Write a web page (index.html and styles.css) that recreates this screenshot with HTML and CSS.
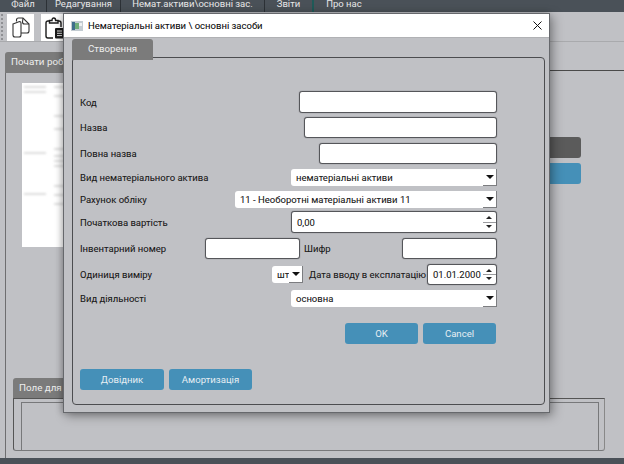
FILE: index.html
```html
<!DOCTYPE html>
<html>
<head>
    <title>Нематеріальні активи</title>
    <link rel="stylesheet" href="styles.css">
</head>

<body>

  <div class="app">
    <div class="menubar">
      <span class="menu-item m1">Файл</span>
      <span class="menu-item m2">Редагування</span>
      <span class="menu-item m3">Немат.активи\основні зас.</span>
      <span class="menu-item m4">Звіти</span>
      <span class="menu-item m5">Про нас</span>
    </div>

    <div class="toolbar">
      <div class="grip"></div>
      <div class="tool tool1">
        <svg width="18" height="21" viewBox="0 0 18 21" fill="none" stroke="#333" stroke-width="1.1">
          <path d="M1 7 L7.5 4.5 Q9 4.5 9 6 V18 Q9 20 7 20 H3 Q1 20 1 18 Z"/>
          <path d="M4.5 4.5 V3 Q4.5 1 6.5 1 H11 L17 7 V14 Q17 16 15 16 H9"/>
          <path d="M11 1 L10.5 5 Q10.5 7 12.5 7 H17"/>
        </svg>
      </div>
      <div class="tool tool2">
        <svg width="19" height="22" viewBox="0 0 19 22" fill="none" stroke="#1c1c1c" stroke-width="1.4">
          <path d="M4.5 4 H3 Q1 4 1 6 V19 Q1 21 3 21 H8"/>
          <path d="M13 4 H14 Q16 4 16 6 V10"/>
          <path d="M4.5 6 V3.5 H7 Q7 1 8.8 1 Q10.6 1 10.6 3.5 H13 V6 Z"/>
          <rect x="10" y="11" width="9" height="10.5" rx="1" fill="#1c1c1c" stroke="none"/>
          <path d="M12 14 H17 M12 16.3 H17 M12 18.6 H17" stroke="#e4e4e4" stroke-width="1"/>
        </svg>
      </div>
    </div>

    <div class="workspace">
      <div class="panel-tab">Почати робот</div>
      <div class="panel">
        <div class="preview">
          <div class="preview-col">
            <i class="at4"></i><i></i>
            <i class="at58"></i>
            <i class="at38"></i>
          </div>
          <div class="preview-col short">
            <i class="at4"></i><i class="at8"></i>
            <i class="at18"></i><i class="at12"></i>
            <i class="at18"></i><i class="at7"></i><i class="at4"></i><i class="at4"></i>
            <i class="at18"></i><i class="at8"></i><i class="at8"></i>
          </div>
        </div>
        <div class="side-buttons">
          <div class="side-btn dark"></div>
          <div class="side-btn blue"></div>
        </div>
      </div>
      <div class="notes">
        <div class="notes-tab">Поле для</div>
        <div class="notes-box">
          <div class="notes-inner"></div>
        </div>
      </div>
    </div>
  </div>

  <div class="dialog">
    <div class="titlebar">
      <svg class="win-icon" width="12" height="10" viewBox="0 0 12 10">
        <rect width="12" height="10" fill="#c3ccd2"/>
        <rect x="1" y="1" width="3" height="8" fill="#3f6f8c"/>
        <rect x="4" y="2" width="4" height="6" fill="#6fae7a"/>
        <rect x="8" y="2" width="3" height="3" fill="#eef1f3"/>
      </svg>
      <span class="title">Нематеріальні активи \ основні засоби</span>
      <svg class="close" width="9" height="9" viewBox="0 0 9 9" stroke="#111" stroke-width="1">
        <path d="M0.5 0.5 L8.5 8.5 M8.5 0.5 L0.5 8.5"/>
      </svg>
    </div>

    <div class="body">
      <div class="tab">Створення</div>
      <div class="group">

        <div class="row r-code">
          <label>Код</label>
          <input class="field w198" type="text">
        </div>
        <div class="row r-name first">
          <label>Назва</label>
          <input class="field w193" type="text">
        </div>
        <div class="row r-name">
          <label>Повна назва</label>
          <input class="field w178" type="text">
        </div>
        <div class="row r-combo">
          <label>Вид нематеріального актива</label>
          <div class="combo w206"><span>нематеріальні активи</span><b></b></div>
        </div>
        <div class="row r-combo">
          <label>Рахунок обліку</label>
          <div class="combo w262"><span>11 - Необоротні матеріальні активи 11</span><b></b></div>
        </div>
        <div class="row r-spin">
          <label>Початкова вартість</label>
          <div class="spin w206"><span>0,00</span><em></em></div>
        </div>
        <div class="row r-inv">
          <label class="inv-label">Інвентарний номер</label>
          <input class="field w95" type="text">
          <label class="cipher">Шифр</label>
          <input class="field w95" type="text">
        </div>
        <div class="row r-name">
          <label>Одиниця виміру</label>
          <div class="combo w31"><span>шт</span><b></b></div>
          <label class="date-label">Дата вводу в експлатацію</label>
          <div class="spin w70"><span>01.01.2000</span><em></em></div>
        </div>
        <div class="row r-combo">
          <label>Вид діяльності</label>
          <div class="combo w206"><span>основна</span><b></b></div>
        </div>

        <div class="ok-row">
          <button class="btn w73">OK</button>
          <button class="btn w73">Cancel</button>
        </div>
        <div class="bottom-row">
          <button class="btn w84">Довідник</button>
          <button class="btn w83">Амортизація</button>
        </div>
      </div>
    </div>
  </div>

</body>

</html>
```

FILE: styles.css
```css
html, body {
  margin: 0;
  padding: 0;
}

body {
  width: 624px;
  height: 464px;
  overflow: hidden;
  position: relative;
  background: #c0c1c5;
  color: #1c1c1c;
  font-family: Roboto, sans-serif;
  font-size: 9.5px;
  text-shadow: 0 0 .6px rgba(0, 0, 0, .25);
}

.app {
  height: 464px;
  display: flex;
  flex-direction: column;
  border-bottom: 6px solid #4a5158;
  box-sizing: border-box;
}

.menubar {
  height: 12px;
  flex: none;
  display: flex;
  background: #4a5158;
  color: #e8e8e8;
  font-size: 9.5px;
  line-height: 8px;
  overflow: hidden;
  text-shadow: none;
}

.menu-item {
  box-sizing: border-box;
  border-right: 1px solid #2c3136;
  text-align: center;
}
.m1 { width: 47px; }
.m2 { width: 74px; }
.m3 { width: 144px; }
.m4 { width: 49px; border-right: 2px solid #1f5a58; }
.m5 { width: 60px; border-right: 0; }

.toolbar {
  height: 30px;
  flex: none;
  display: flex;
  padding-top: 2px;
  box-sizing: border-box;
  border-bottom: 1px solid #a9aaad;
}

.grip {
  width: 0;
  height: 26px;
  margin-left: 1px;
  margin-right: 4px;
  border-left: 2px dotted #8f9094;
}

.tool {
  height: 27px;
  background: #fff;
  display: flex;
  align-items: center;
  box-sizing: border-box;
}
.tool1 { width: 27px; padding-left: 5px; margin-right: 7px; }
.tool2 { width: 30px; padding-left: 4px; }

.workspace {
  flex: 1;
  padding: 10px 0 0 5px;
  display: flex;
  flex-direction: column;
  min-height: 0;
}

.panel-tab {
  width: 80px;
  height: 21px;
  flex: none;
  position: relative;
  z-index: 1;
  background: #7b7b7b;
  color: #eee;
  font-size: 9.8px;
  line-height: 20px;
  padding-left: 6px;
  border-radius: 3px 3px 0 0;
  white-space: nowrap;
  box-sizing: border-box;
  text-shadow: none;
}

.panel {
  flex: 1;
  margin-top: -3px;
  border-top: 1px solid #4a4a4a;
  border-left: 1px solid #6e6e70;
  padding: 12px 0 0 16px;
  position: relative;
  min-height: 0;
}

.preview {
  width: 60px;
  height: 164px;
  background: #fff;
  display: flex;
  gap: 8px;
  padding: 0 2px;
  box-sizing: border-box;
}

.preview-col {
  width: 22px;
}
.preview-col.short {
  width: 26px;
}

.preview-col i {
  display: block;
  height: 2px;
  background: #dedede;
  filter: blur(1px);
  margin-top: 3px;
}

.preview-col .at4 { margin-top: 3px; }
.preview-col .at7 { margin-top: 5px; }
.preview-col .at8 { margin-top: 7px; }
.preview-col .at12 { margin-top: 11px; }
.preview-col .at18 { margin-top: 18px; }
.preview-col .at38 { margin-top: 39px; }
.preview-col .at58 { margin-top: 59px; }

.side-buttons {
  position: absolute;
  left: 500px;
  top: 66px;
  display: flex;
  flex-direction: column;
  gap: 5px;
}

.side-btn {
  width: 75px;
  height: 21px;
  border-radius: 3px;
}
.dark { background: #5b5b5b; }
.blue { background: #4590b8; }

.notes {
  position: absolute;
  left: 13px;
  top: 378px;
  width: 592px;
}

.notes-tab {
  width: 70px;
  height: 20px;
  background: #7b7b7b;
  color: #eee;
  font-size: 9.8px;
  line-height: 20px;
  padding-left: 6px;
  border-radius: 3px 3px 0 0;
  box-sizing: border-box;
  text-shadow: none;
}

.notes-box {
  border: 1px solid #555;
  border-radius: 0 0 3px 3px;
  height: 53px;
  padding: 3px 5px 0 7px;
  box-sizing: border-box;
  border-right-color: #888;
  border-bottom-color: #77787a;
}

.notes-inner {
  height: 48px;
  border: 1px solid #77787a;
  border-bottom: 0;
}

/* dialog window over the main app */
.dialog {
  position: absolute;
  z-index: 2;
  left: 63px;
  top: 13px;
  width: 487px;
  height: 400px;
  background: #c0c1c5;
  box-sizing: border-box;
  border: 1px solid #66686c;
  box-shadow: 3px 3px 10px rgba(0, 0, 0, .35), -2px 0 6px rgba(0, 0, 0, .2);
}

.titlebar {
  height: 24px;
  box-sizing: border-box;
  background: #fff;
  display: flex;
  align-items: center;
  padding-left: 7px;
  border-bottom: 1px solid #b0b1b4;
}

.win-icon {
  margin-right: 5px;
}

.title {
  font-size: 9.5px;
  color: #111;
  flex: 1;
}

.close {
  margin-right: 7px;
}

.body {
  padding: 1px 4px 0 8px;
}

.tab {
  width: 81px;
  height: 21px;
  background: #7b7b7b;
  color: #eee;
  font-size: 9.7px;
  line-height: 20px;
  text-align: center;
  border-radius: 3px 3px 0 0;
  position: relative;
  z-index: 1;
  text-shadow: none;
}

.group {
  height: 348px;
  width: 473px;
  margin-top: -3px;
  border: 1px solid #4c4d50;
  border-radius: 4px;
  padding: 33px 47px 0 7px;
  box-sizing: border-box;
}

.row {
  display: flex;
  align-items: center;
}

.row label {
  flex: 1;
  white-space: nowrap;
}

.r-code { height: 22px; }
.r-name { height: 21px; margin-top: 5px; }
.r-name.first { margin-top: 4px; }
.r-combo { height: 17px; margin-top: 5px; }
.r-spin { height: 22px; margin-top: 3px; }
.r-inv { height: 21px; margin-top: 5px; }

.row .inv-label { flex: none; width: 125px; }
.row .cipher { flex: none; width: 98px; margin-left: 4px; }
.row .date-label { flex: none; width: 114px; margin: 0 4px 0 6px; }

.field {
  box-sizing: border-box;
  height: 100%;
  background: #fff;
  border: 1px solid #55565a;
  border-radius: 3px;
  box-shadow: 0 0 1px #55565a;
  padding: 0;
  outline: 0;
}

.combo {
  box-sizing: border-box;
  height: 17px;
  background: #fff;
  border-radius: 3px 0 0 3px;
  display: flex;
  align-items: center;
  padding-left: 5px;
}

.combo span {
  flex: 1;
  white-space: nowrap;
}

.combo b {
  flex: none;
  width: 14px;
  height: 17px;
  box-sizing: border-box;
  background: #fff;
  border-right: 1px solid #7c7d80;
  border-bottom: 1px solid #7c7d80;
  position: relative;
}

.combo b::after {
  content: "";
  position: absolute;
  left: 3px;
  top: 6px;
  border-left: 4px solid transparent;
  border-right: 4px solid transparent;
  border-top: 4px solid #111;
}

.spin {
  box-sizing: border-box;
  height: 100%;
  background: #fff;
  border: 1px solid #55565a;
  border-radius: 3px;
  box-shadow: 0 0 1px #55565a;
  display: flex;
  align-items: center;
  padding-left: 5px;
}

.spin span {
  flex: 1;
  white-space: nowrap;
}

.spin em {
  flex: none;
  width: 13px;
  height: 100%;
  position: relative;
  background:
    linear-gradient(#9a9b9e, #9a9b9e) center / 100% 1px no-repeat;
}

.spin em::before,
.spin em::after {
  content: "";
  position: absolute;
  left: 3px;
  border-left: 3px solid transparent;
  border-right: 3px solid transparent;
}
.spin em::before {
  top: 4px;
  border-bottom: 3px solid #222;
}
.spin em::after {
  bottom: 4px;
  border-top: 3px solid #222;
}

.ok-row {
  display: flex;
  justify-content: flex-end;
  gap: 5px;
  margin-top: 16px;
  padding-right: 1px;
}

.bottom-row {
  display: flex;
  gap: 5px;
  margin-top: 25px;
}

.btn {
  height: 21px;
  border: 0;
  padding: 0;
  background: #4590b8;
  color: #e6eef3;
  font-family: Roboto, sans-serif;
  font-size: 9.6px;
  border-radius: 3px;
  text-shadow: none;
}

.w31 { width: 31px; }
.w70 { width: 70px; }
.w73 { width: 73px; }
.w83 { width: 83px; }
.w84 { width: 84px; }
.w95 { width: 95px; }
.w178 { width: 178px; }
.w193 { width: 193px; }
.w198 { width: 198px; }
.w206 { width: 206px; }
.w262 { width: 262px; }
```
